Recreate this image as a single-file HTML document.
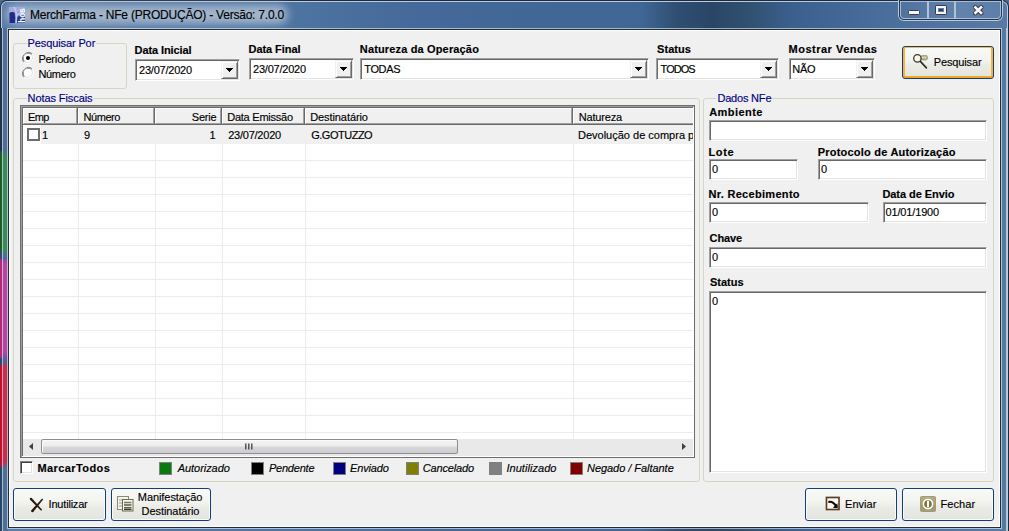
<!DOCTYPE html>
<html><head><meta charset="utf-8">
<style>
*{margin:0;padding:0;box-sizing:border-box}
html,body{width:1009px;height:531px;overflow:hidden;background:#4a6a92}
body{position:relative;font-family:"Liberation Sans",sans-serif;font-size:11px;color:#000}
.a{position:absolute}
.t{position:absolute;white-space:nowrap;line-height:13px;font-size:11px;-webkit-text-stroke:0.15px currentColor}
.b{font-weight:bold}
.cap{color:#000080;background:#f0f0f0;padding:0 1px}
.grp{position:absolute;border:1px solid #d5d5c5;border-radius:3px}
.ed{position:absolute;background:#fff;border:1px solid;border-color:#a0a0a0 #fff #fff #a0a0a0;box-shadow:inset 1px 1px 0 #696969,inset -1px -1px 0 #e3e3e3}
.dd{position:absolute;background:#f0f0f0;border:1px solid;border-color:#f0f0f0 #696969 #696969 #f0f0f0;box-shadow:inset 1px 1px 0 #fff,inset -1px -1px 0 #a0a0a0}
.arr{position:absolute;width:0;height:0;border-left:3.5px solid transparent;border-right:3.5px solid transparent;border-top:4px solid #000}
.btn{position:absolute;border:1px solid #123f78;border-radius:3px;background:linear-gradient(#f9f9f7 0%,#f3f3f0 40%,#ebebe6 60%,#e4e4de 100%);box-shadow:inset 0 0 0 1px #fbfbf9}
.sw{position:absolute;width:13px;height:13px;border:1px solid #808080}
.row{position:absolute;left:23px;width:670px;height:1px;background:#ececec}
.col{position:absolute;top:126px;height:307px;width:1px;background:#ececec}
</style></head><body>
<!-- window frame -->
<div class="a" style="left:0;top:0;width:1009px;height:531px;background:#1c2a3c;border-radius:7px 7px 0 0"></div>
<div class="a" style="left:1px;top:1px;width:1007px;height:530px;background:#bccbe0;border-radius:6px 6px 0 0"></div>
<div class="a" style="left:2px;top:2px;width:1005px;height:529px;border-radius:5px 5px 0 0;background:linear-gradient(90deg,#5a7ba6 0px,#4d73a0 300px,#44699a 420px,#3f6694 640px,#2f4e72 675px,#2a4666 710px,#30506f 745px,#3b608e 790px,#4a6e9b 880px,#587aa5 1005px)"></div>
<div class="a" style="left:6px;top:5px;width:282px;height:19px;background:#a2b5cc;border-radius:9px;filter:blur(4px)"></div>
<div class="a" style="left:0;top:28px;width:2px;height:503px;background:linear-gradient(#22344c 0px,#22344c 122px,#1e5c2a 124px,#1e5c2a 222px,#2a4a78 224px,#2a4a78 230px,#b02a78 232px,#b02a78 329px,#284a72 331px,#284a72 337px,#c0102e 339px,#c0102e 437px,#26466a 440px)"></div>
<div class="a" style="left:2px;top:28px;width:6px;height:503px;background:linear-gradient(#4d6f98 0px,#4d6f98 122px,#3c8a5c 130px,#3c8a5c 222px,#5a62a0 230px,#b048a0 236px,#b048a0 324px,#5060a0 332px,#c03050 339px,#c03050 432px,#4f6f96 441px,#4f6f96 503px)"></div>
<div class="a" style="left:1002px;top:28px;width:5px;height:503px;background:#56799f"></div>
<div class="a" style="left:2px;top:28px;width:1px;height:503px;background:rgba(255,255,255,.55)"></div>
<div class="a" style="left:1006px;top:28px;width:1px;height:503px;background:#b6c6da"></div>
<!-- client -->
<div class="a" style="left:7px;top:28px;width:995px;height:501px;border:1px solid rgba(255,255,255,.55)"></div>
<div class="a" style="left:8px;top:29px;width:993px;height:499px;background:#1f2c3c"></div>
<div class="a" style="left:9px;top:30px;width:991px;height:497px;background:#fff"></div>
<div class="a" style="left:10px;top:31px;width:989px;height:495px;background:#f0f0f0"></div>

<!-- title -->
<svg class="a" style="left:9px;top:7px" width="16" height="16" viewBox="0 0 16 16">
<rect x="0" y="0" width="16" height="16" rx="1.5" fill="#8c94cc"/>
<rect x="0" y="0" width="16" height="5" fill="#a4aadc"/>
<path d="M0.5 6 Q3 4.5 5.5 5.5 Q6.5 10 6 16 L0.5 16 Z" fill="#1f2b86"/>
<path d="M7.5 9.5 L16 8.5 L16 16 L7.5 16 Z" fill="#293690"/>
<path d="M4 0 Q6 3 6.5 7 Q7.5 11 6.5 16 L8 16 Q8 10 9 8 Q12 6 16 5.5 L16 4 Q11 4.5 8.5 6.5 Q7.5 3 6 0Z" fill="#c0c6ec"/>
<text transform="translate(15.6,15.8) rotate(-90)" font-family="Liberation Sans" font-weight="bold" font-size="8.2" fill="#fff">hos</text>
</svg>
<div class="t" style="left:30px;top:8px;font-size:12px;line-height:14px;color:#000;letter-spacing:-0.22px">MerchFarma - NFe (PRODUÇÃO) - Versão: 7.0.0</div>

<!-- caption buttons -->
<div class="a" style="left:898px;top:0;width:105px;height:21px;border:1px solid #b9c9dc;border-top:none;border-radius:0 0 6px 6px"></div>
<div class="a" style="left:899px;top:0;width:103px;height:20px;border:1px solid #243650;border-top:none;border-radius:0 0 5px 5px"></div>
<div class="a" style="left:900px;top:1px;width:101px;height:18px;border:1px solid #a9bdd6;border-bottom-color:#a9bdd6;border-radius:0 0 4px 4px;background:linear-gradient(90deg,#4e729e,#6283ad 60%,#5c7ea8)"></div>
<div class="a" style="left:927px;top:1px;width:2px;height:18px;background:#b0c2d8;border-left:1px solid #b0c2d8"></div>
<div class="a" style="left:954px;top:1px;width:2px;height:18px;background:#b0c2d8"></div>
<div class="a" style="left:908px;top:10px;width:12px;height:5px;background:#f4f4f4;border:1px solid #3a3c4c;border-radius:1.5px"></div>
<div class="a" style="left:935px;top:5px;width:12px;height:10px;background:#5f80aa;border:1px solid #3a3c4c;border-radius:1.5px;box-shadow:inset 0 0 0 2px #f4f4f4"></div>
<div class="a" style="left:939px;top:9px;width:4px;height:2px;border:1px solid #3a3c4c;background:#5f80aa"></div>
<svg class="a" style="left:972px;top:4px" width="13" height="12" viewBox="972 4 13 12"><path d="M975.2 7.2 L981.3 13.1 M981.3 7.2 L975.2 13.1" stroke="#3a3c4c" stroke-width="4.4" stroke-linecap="round"/><path d="M975.4 7.4 L981.1 12.9 M981.1 7.4 L975.4 12.9" stroke="#f6f6f6" stroke-width="2.6" stroke-linecap="square"/></svg>

<!-- Pesquisar Por -->
<div class="grp" style="left:13px;top:43px;width:114px;height:46px"></div>
<div class="t cap" style="left:26.5px;top:37px;letter-spacing:-0.108px">Pesquisar Por</div>
<div class="t" style="left:38.4px;top:53px;letter-spacing:-0.317px">Período</div>
<div class="t" style="left:38.4px;top:68px;letter-spacing:-0.32px">Número</div>

<!-- labels top -->
<div class="t b" style="left:134.6px;top:44px;letter-spacing:-0.1px">Data Inicial</div>
<div class="t b" style="left:248.5px;top:43px;letter-spacing:-0.056px">Data Final</div>
<div class="t b" style="left:359.8px;top:43px;letter-spacing:0.153px">Natureza da Operação</div>
<div class="t b" style="left:657.1px;top:43px;letter-spacing:0.02px">Status</div>
<div class="t b" style="left:788.6px;top:43px;letter-spacing:0.492px">Mostrar Vendas</div>

<div class="ed" style="left:135px;top:59px;width:105px;height:22px"></div>
<div class="dd" style="left:221px;top:61px;width:17px;height:18px"></div>
<svg class="a" style="left:226px;top:68px" width="7" height="4" shape-rendering="crispEdges"><rect x="0" y="0" width="7" height="1"/><rect x="1" y="1" width="5" height="1"/><rect x="2" y="2" width="3" height="1"/><rect x="3" y="3" width="1" height="1"/></svg>
<div class="t" style="left:139px;top:64px;letter-spacing:-0.222px">23/07/2020</div>
<div class="ed" style="left:249px;top:58px;width:105px;height:22px"></div>
<div class="dd" style="left:335px;top:60px;width:17px;height:18px"></div>
<svg class="a" style="left:340px;top:67px" width="7" height="4" shape-rendering="crispEdges"><rect x="0" y="0" width="7" height="1"/><rect x="1" y="1" width="5" height="1"/><rect x="2" y="2" width="3" height="1"/><rect x="3" y="3" width="1" height="1"/></svg>
<div class="t" style="left:253px;top:63px;letter-spacing:-0.222px">23/07/2020</div>
<div class="ed" style="left:360px;top:58px;width:289px;height:22px"></div>
<div class="dd" style="left:630px;top:60px;width:17px;height:18px"></div>
<svg class="a" style="left:635px;top:67px" width="7" height="4" shape-rendering="crispEdges"><rect x="0" y="0" width="7" height="1"/><rect x="1" y="1" width="5" height="1"/><rect x="2" y="2" width="3" height="1"/><rect x="3" y="3" width="1" height="1"/></svg>
<div class="t" style="left:364.3px;top:63px;letter-spacing:-0.375px">TODAS</div>
<div class="ed" style="left:656px;top:58px;width:123px;height:22px"></div>
<div class="dd" style="left:760px;top:60px;width:17px;height:18px"></div>
<svg class="a" style="left:765px;top:67px" width="7" height="4" shape-rendering="crispEdges"><rect x="0" y="0" width="7" height="1"/><rect x="1" y="1" width="5" height="1"/><rect x="2" y="2" width="3" height="1"/><rect x="3" y="3" width="1" height="1"/></svg>
<div class="t" style="left:660.6px;top:63px;letter-spacing:-0.975px">TODOS</div>
<div class="ed" style="left:789px;top:58px;width:86px;height:22px"></div>
<div class="dd" style="left:856px;top:60px;width:17px;height:18px"></div>
<svg class="a" style="left:861px;top:67px" width="7" height="4" shape-rendering="crispEdges"><rect x="0" y="0" width="7" height="1"/><rect x="1" y="1" width="5" height="1"/><rect x="2" y="2" width="3" height="1"/><rect x="3" y="3" width="1" height="1"/></svg>
<div class="t" style="left:792.3px;top:63px;letter-spacing:-0.35px">NÃO</div>

<!-- Pesquisar button -->
<div class="btn" style="left:902px;top:46px;width:92px;height:33px;border-color:#123f78;box-shadow:inset 0 1px 0 #f9b94a,inset 0 -2px 0 #f5a623,inset 2px 0 0 #f7b23c,inset -2px 0 0 #f7b23c"></div>
<div class="t" style="left:933.8px;top:56px;letter-spacing:-0.137px">Pesquisar</div>

<!-- Notas Fiscais -->
<div class="grp" style="left:13px;top:98px;width:687px;height:384px"></div>
<div class="t cap" style="left:26.6px;top:92px;letter-spacing:-0.092px">Notas Fiscais</div>
<!-- grid -->
<div class="a" style="left:20px;top:105px;width:675px;height:353px;background:#fff;border:1px solid #6d6d6d"></div>
<div class="a" style="left:21px;top:106px;width:673px;height:1px;background:#a0a0a0"></div>
<div class="a" style="left:21px;top:106px;width:1px;height:351px;background:#a0a0a0"></div>
<div class="a" style="left:22px;top:107px;width:671px;height:1px;background:#696969"></div>
<div class="a" style="left:22px;top:107px;width:1px;height:349px;background:#696969"></div>
<div class="a" style="left:23px;top:108px;width:54px;height:16px;background:#f0f0f0;border-top:1px solid #fff;border-left:1px solid #fff;border-right:1px solid #a0a0a0;border-bottom:1px solid #a0a0a0"></div>
<div class="a" style="left:77px;top:108px;width:1px;height:17px;background:#696969"></div>
<div class="a" style="left:78px;top:108px;width:76px;height:16px;background:#f0f0f0;border-top:1px solid #fff;border-left:1px solid #fff;border-right:1px solid #a0a0a0;border-bottom:1px solid #a0a0a0"></div>
<div class="a" style="left:154px;top:108px;width:1px;height:17px;background:#696969"></div>
<div class="a" style="left:155px;top:108px;width:66px;height:16px;background:#f0f0f0;border-top:1px solid #fff;border-left:1px solid #fff;border-right:1px solid #a0a0a0;border-bottom:1px solid #a0a0a0"></div>
<div class="a" style="left:221px;top:108px;width:1px;height:17px;background:#696969"></div>
<div class="a" style="left:222px;top:108px;width:82px;height:16px;background:#f0f0f0;border-top:1px solid #fff;border-left:1px solid #fff;border-right:1px solid #a0a0a0;border-bottom:1px solid #a0a0a0"></div>
<div class="a" style="left:304px;top:108px;width:1px;height:17px;background:#696969"></div>
<div class="a" style="left:305px;top:108px;width:267px;height:16px;background:#f0f0f0;border-top:1px solid #fff;border-left:1px solid #fff;border-right:1px solid #a0a0a0;border-bottom:1px solid #a0a0a0"></div>
<div class="a" style="left:572px;top:108px;width:1px;height:17px;background:#696969"></div>
<div class="a" style="left:573px;top:108px;width:120px;height:16px;background:#f0f0f0;border-top:1px solid #fff;border-left:1px solid #fff;border-bottom:1px solid #a0a0a0"></div>
<div class="a" style="left:23px;top:124px;width:670px;height:1px;background:#696969"></div>
<div class="a" style="left:23px;top:125px;width:670px;height:19px;background:#f0f0f0"></div>
<div class="row" style="top:160px"></div>
<div class="row" style="top:177px"></div>
<div class="row" style="top:194px"></div>
<div class="row" style="top:211px"></div>
<div class="row" style="top:228px"></div>
<div class="row" style="top:245px"></div>
<div class="row" style="top:262px"></div>
<div class="row" style="top:279px"></div>
<div class="row" style="top:296px"></div>
<div class="row" style="top:313px"></div>
<div class="row" style="top:330px"></div>
<div class="row" style="top:347px"></div>
<div class="row" style="top:364px"></div>
<div class="row" style="top:381px"></div>
<div class="row" style="top:398px"></div>
<div class="row" style="top:415px"></div>
<div class="row" style="top:432px"></div>
<div class="col" style="left:78px;top:144px;height:295px"></div>
<div class="col" style="left:155px;top:144px;height:295px"></div>
<div class="col" style="left:222px;top:144px;height:295px"></div>
<div class="col" style="left:305px;top:144px;height:295px"></div>
<div class="col" style="left:573px;top:144px;height:295px"></div>
<div class="t" style="left:28px;top:111px;letter-spacing:-0.625px">Emp</div>
<div class="t" style="left:83.6px;top:111px;letter-spacing:-0.46px">Número</div>
<div class="t" style="left:156.5px;top:111px;width:60px;text-align:right;letter-spacing:-0.2px">Serie</div>
<div class="t" style="left:227.2px;top:111px;letter-spacing:-0.236px">Data Emissão</div>
<div class="t" style="left:310.2px;top:111px;letter-spacing:-0.082px">Destinatário</div>
<div class="t" style="left:578.7px;top:111px;letter-spacing:-0.157px">Natureza</div>
<div class="t" style="left:42px;top:129px">1</div>
<div class="t" style="left:84px;top:129px">9</div>
<div class="t" style="left:155.7px;top:129px;width:60px;text-align:right;letter-spacing:0px">1</div>
<div class="t" style="left:228.2px;top:129px;letter-spacing:-0.233px">23/07/2020</div>
<div class="t" style="left:311.2px;top:129px;letter-spacing:-0.487px">G.GOTUZZO</div>
<div class="a" style="left:23px;top:125px;width:18px;height:19px;background:#fff"></div>
<div class="a" style="left:573px;top:125px;width:120px;height:19px;overflow:hidden"><div class="t" style="left:5px;top:4px">Devolução de compra para fornecedor</div></div>
<div class="a" style="left:27px;top:128px;width:13px;height:13px;border:2px solid #6d6d6d;background:#fff"></div>
<div class="a" style="left:23px;top:439px;width:670px;height:17px;background:#e9e9e9"></div>
<div class="a" style="left:41px;top:439px;width:417px;height:15px;border:1px solid #8e8e8e;border-radius:2px;background:linear-gradient(#f4f4f4 0%,#ececec 48%,#d8d8dc 52%,#cdcdd1 100%);box-shadow:inset 1px 1px 0 #fbfbfb"></div>
<svg class="a" style="left:244px;top:442px" width="10" height="9"><path d="M1.8 1.5v6M4.8 1.5v6M7.8 1.5v6" stroke="#3c3c3c" stroke-width="1.3"/></svg>

<!-- Dados NFe -->
<div class="grp" style="left:703px;top:98px;width:291px;height:384px"></div>
<div class="t cap" style="left:716.4px;top:92px;letter-spacing:-0.188px">Dados NFe</div>
<div class="t b" style="left:709.2px;top:106px;letter-spacing:0.443px">Ambiente</div>
<div class="ed" style="left:709px;top:120px;width:278px;height:21px"></div>
<div class="t b" style="left:708.4px;top:146px;letter-spacing:0.7px">Lote</div>
<div class="ed" style="left:709px;top:159px;width:89px;height:21px"></div>
<div class="t" style="left:712px;top:163px">0</div>
<div class="t b" style="left:817.7px;top:146px;letter-spacing:0.217px">Protocolo de Autorização</div>
<div class="ed" style="left:818px;top:159px;width:169px;height:21px"></div>
<div class="t" style="left:821px;top:163px">0</div>
<div class="t b" style="left:708.4px;top:188px;letter-spacing:0.314px">Nr. Recebimento</div>
<div class="ed" style="left:709px;top:202px;width:160px;height:21px"></div>
<div class="t" style="left:712px;top:206px">0</div>
<div class="t b" style="left:882.4px;top:188px;letter-spacing:-0.05px">Data de Envio</div>
<div class="ed" style="left:883px;top:202px;width:104px;height:21px"></div>
<div class="t" style="left:885.5px;top:206px;letter-spacing:-0.15px">01/01/1900</div>
<div class="t b" style="left:709.6px;top:232px;letter-spacing:-0.1px">Chave</div>
<div class="ed" style="left:709px;top:247px;width:278px;height:21px"></div>
<div class="t" style="left:712px;top:251px">0</div>
<div class="t b" style="left:710px;top:276px;letter-spacing:0px">Status</div>
<div class="ed" style="left:709px;top:291px;width:278px;height:182px"></div>
<div class="t" style="left:712px;top:295px">0</div>

<!-- bottom buttons -->
<div class="btn" style="left:13px;top:488px;width:93px;height:33px"></div>
<div class="t" style="left:48.6px;top:498px;letter-spacing:-0.2px">Inutilizar</div>
<div class="btn" style="left:111px;top:488px;width:100px;height:33px"></div>
<div class="t" style="left:137.8px;top:491px;letter-spacing:-0.073px">Manifestação</div>
<div class="t" style="left:141.6px;top:505px;letter-spacing:-0.073px">Destinatário</div>
<div class="btn" style="left:805px;top:488px;width:92px;height:33px"></div>
<div class="t" style="left:845px;top:498px;letter-spacing:0.04px">Enviar</div>
<div class="btn" style="left:902px;top:488px;width:92px;height:33px"></div>
<div class="t" style="left:940.4px;top:498px;letter-spacing:0.12px">Fechar</div>
<svg class="a" style="left:22px;top:52px" width="12" height="12" viewBox="0 0 12 12"><path d="M10.2 1.8 A6 6 0 0 0 1.8 10.2" fill="none" stroke="#808080" stroke-width="1"/><path d="M9.5 2.5 A5 5 0 0 0 2.5 9.5" fill="none" stroke="#404040" stroke-width="1"/><circle cx="6" cy="6" r="4.5" fill="#fff"/><path d="M1.8 10.2 A6 6 0 0 0 10.2 1.8" fill="none" stroke="#fff" stroke-width="1"/><path d="M2.5 9.5 A5 5 0 0 0 9.5 2.5" fill="none" stroke="#e3e3e3" stroke-width="1"/><circle cx="6" cy="6" r="2" fill="#000"/></svg>
<svg class="a" style="left:22px;top:67px" width="12" height="12" viewBox="0 0 12 12"><path d="M10.2 1.8 A6 6 0 0 0 1.8 10.2" fill="none" stroke="#808080" stroke-width="1"/><path d="M9.5 2.5 A5 5 0 0 0 2.5 9.5" fill="none" stroke="#404040" stroke-width="1"/><circle cx="6" cy="6" r="4.5" fill="#fff"/><path d="M1.8 10.2 A6 6 0 0 0 10.2 1.8" fill="none" stroke="#fff" stroke-width="1"/><path d="M2.5 9.5 A5 5 0 0 0 9.5 2.5" fill="none" stroke="#e3e3e3" stroke-width="1"/></svg>
<div class="a" style="left:20px;top:461px;width:13px;height:13px;border:1px solid;border-color:#808080 #fff #fff #808080;box-shadow:inset 1px 1px 0 #404040,inset -1px -1px 0 #e3e3e3;background:#fff"></div>
<div class="t b" style="left:37.5px;top:462px;letter-spacing:0.4px">MarcarTodos</div>
<div class="sw" style="left:159px;top:462px;background:#0a7a10"></div>
<div class="t" style="left:177.7px;top:462px;font-style:italic;letter-spacing:-0.044px">Autorizado</div>
<div class="sw" style="left:251px;top:462px;background:#000000"></div>
<div class="t" style="left:268.9px;top:462px;font-style:italic;letter-spacing:-0.2px">Pendente</div>
<div class="sw" style="left:333px;top:462px;background:#000080"></div>
<div class="t" style="left:350.1px;top:462px;font-style:italic;letter-spacing:-0.183px">Enviado</div>
<div class="sw" style="left:406px;top:462px;background:#808000"></div>
<div class="t" style="left:422.7px;top:462px;font-style:italic;letter-spacing:-0.137px">Cancelado</div>
<div class="sw" style="left:489px;top:462px;background:#808080"></div>
<div class="t" style="left:506.4px;top:462px;font-style:italic;letter-spacing:0.05px">Inutilizado</div>
<div class="sw" style="left:570px;top:462px;background:#800000"></div>
<div class="t" style="left:587px;top:462px;font-style:italic;letter-spacing:-0.044px">Negado / Faltante</div>
<svg class="a" style="left:28px;top:442px" width="6" height="9"><path d="M1 4.5 L5 1 L5 8 Z" fill="#404040"/></svg>
<svg class="a" style="left:681px;top:442px" width="6" height="9"><path d="M5 4.5 L1 1 L1 8 Z" fill="#404040"/></svg>

<svg class="a" style="left:908px;top:50px" width="24" height="24" viewBox="908 50 24 24">
<rect x="920.5" y="55" width="7.5" height="5.4" rx="2.4" fill="#a9a47c"/>
<rect x="921.5" y="56.5" width="5" height="2" fill="#d6d2b4"/>
<circle cx="917.4" cy="58.4" r="3.7" fill="#f6f6ee" stroke="#3d3b22" stroke-width="1.3"/>
<path d="M920.6 61.6 L926.4 67.9" stroke="#2f2d1a" stroke-width="1.6" stroke-linecap="round"/>
</svg>
<svg class="a" style="left:26px;top:494px" width="20" height="20" viewBox="26 494 20 20"><polygon points="30.06,499.69 41.06,510.72 42.14,509.68 31.74,498.11" fill="#2a1810"/><polygon points="42.07,498.55 31.45,510.19 33.35,511.81 43.13,499.45" fill="#2a1810"/><circle cx="30.9" cy="498.9" r="1.15" fill="#2a1810"/><circle cx="32.4" cy="511" r="1.25" fill="#2a1810"/></svg>
<svg class="a" style="left:114px;top:493px" width="22" height="22" viewBox="114 493 22 22">
<rect x="117.5" y="496.5" width="11" height="13" fill="#f4f4ee" stroke="#8a8a72" stroke-width="1"/>
<path d="M119 500h5M119 503h5M119 506h5" stroke="#9a9a80" stroke-width="1"/>
<rect x="122.5" y="499.5" width="10.5" height="11.5" fill="#fbfbf6" stroke="#6a6a50" stroke-width="1"/>
<path d="M124 502.5h7.5" stroke="#7a7a5e" stroke-width="1.6"/>
<path d="M124 505h7.5" stroke="#4a4a38" stroke-width="1.4"/>
<path d="M124 507.5h7.5" stroke="#5e5e48" stroke-width="1.2"/>
<path d="M124 509.3h7.5" stroke="#3a3a2a" stroke-width="1.6"/>
</svg>
<svg class="a" style="left:822px;top:493px" width="22" height="22" viewBox="822 493 22 22">
<rect x="825.2" y="496.2" width="15" height="14.6" fill="#dfe6dc"/>
<rect x="826.5" y="497.5" width="12.5" height="12" fill="#fdfcf8" stroke="#5a3a22" stroke-width="1.6"/>
<path d="M829.2 501.8 Q833 501.2 836.2 506.2" stroke="#120a04" stroke-width="2.2" fill="none" stroke-linecap="round"/>
<path d="M832.8 507.8 L837.8 508.2 L837.4 503.2 Z" fill="#120a04"/>
</svg>
<svg class="a" style="left:916px;top:493px" width="22" height="22" viewBox="916 493 22 22">
<rect x="920" y="496" width="16" height="16" rx="2" fill="#a39b73"/>
<rect x="921" y="497" width="14" height="6" rx="1" fill="#b8b28e" opacity=".7"/>
<circle cx="928" cy="504" r="4.6" fill="#7d7444" stroke="#fffef6" stroke-width="1.6"/>
<rect x="927" y="500.8" width="2" height="6.4" fill="#fffef6"/>
</svg>
</body></html>
